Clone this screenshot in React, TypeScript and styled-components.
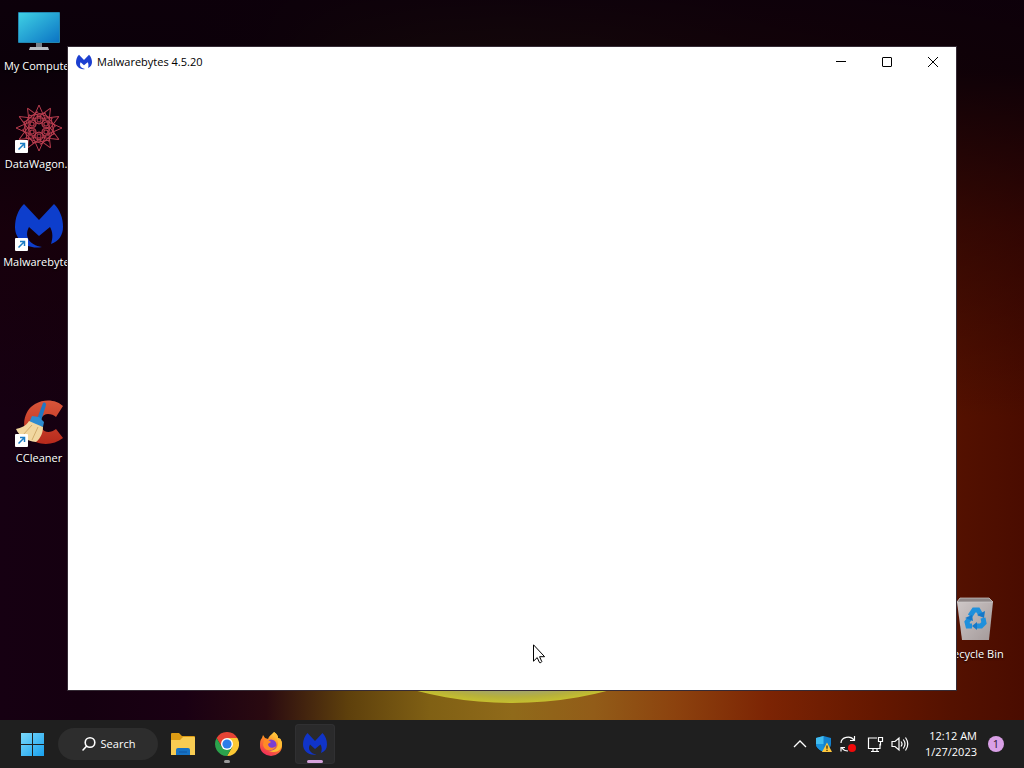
import React from "react";
import styled, { createGlobalStyle } from "styled-components";

const GlobalStyle = createGlobalStyle`
  *, *::before, *::after { box-sizing: border-box; }
  body {
    margin: 0;
    font-family: "Open Sans", "Noto Sans", sans-serif;
    font-size: 11px;
    line-height: 16px;
    background: #120010;
  }
  button { font: inherit; color: inherit; border: 0; padding: 0; background: none; }
  svg { display: block; flex: none; }
`;

const Desktop = styled.div`
  display: flex;
  flex-direction: column;
  min-height: 100vh;
  overflow: hidden;
`;

const Workspace = styled.main`
  position: relative;
  flex: 1;
  overflow: hidden;
  background:
    linear-gradient(180deg, rgba(12, 0, 10, 0.98) 0%, rgba(10, 0, 8, 0.92) 10%, rgba(24, 0, 5, 0.5) 32%, rgba(30, 0, 5, 0) 58%),
    linear-gradient(90deg, #160012 0%, #150010 8%, #1a0013 18%, #2a0a10 26%, #5e400c 34%, #806014 42%, #906a1a 50%, #925c18 58%, #8c420e 66%, #7c2404 75%, #661800 85%, #541100 93%, #4a0c00 100%);
`;

const Sun = styled.div`
  position: absolute;
  left: 50%;
  bottom: 17px;
  width: 680px;
  height: 600px;
  transform: translateX(-50%);
  border-radius: 50%;
  background: radial-gradient(closest-side, #a3a56a 0 96%, #b6b03c 98%, #c6c02e 100%);
`;

const Shortcut = styled.button<{ $row: number; $side?: "left" | "right" }>`
  position: absolute;
  ${(p) => (p.$side === "right" ? "right: 11px;" : "left: 1px;")}
  top: ${(p) => 6 + p.$row * 98}px;
  width: 76px;
  display: flex;
  flex-direction: column;
  align-items: center;
  gap: 4px;
  color: #fff;
  white-space: nowrap;
  text-shadow: 0 1px 2px #000;
`;

const ShortcutArt = styled.span`
  position: relative;
  width: 48px;
  height: 48px;
`;

const ArrowBadge = styled.span`
  position: absolute;
  left: 0;
  bottom: -1px;
`;

const Window = styled.section`
  position: absolute;
  top: 46px;
  right: 67px;
  bottom: 29px;
  left: 67px;
  background: #fff;
  border: 1px solid #352b35;
  color: #000;
`;

const TitleBar = styled.header`
  display: flex;
  align-items: center;
  height: 29px;
  padding-left: 8px;
`;

const Title = styled.h1`
  flex: 1;
  margin: 0 0 0 5px;
  font-size: 11px;
  font-weight: 400;
`;

const WindowButton = styled.button`
  display: grid;
  place-items: center;
  width: 46px;
  height: 28px;
`;

const Pointer = styled.div`
  position: absolute;
  left: 52%;
  bottom: 56px;
  padding-left: 1px;
`;

const Taskbar = styled.footer`
  display: flex;
  align-items: center;
  justify-content: space-between;
  height: 48px;
  padding: 0 10px 0 12px;
  background: #1f1f1f;
  color: #fff;
`;

const Group = styled.div`
  display: flex;
  align-items: center;
  gap: 4px;
`;

const AppButton = styled.button<{ $active?: boolean }>`
  position: relative;
  display: grid;
  place-items: center;
  width: 40px;
  height: 40px;
  border-radius: 4px;
  background: ${(p) => (p.$active ? "#2a2a2b" : "transparent")};
  box-shadow: ${(p) => (p.$active ? "inset 0 0 0 1px #303032" : "none")};
`;

const Indicator = styled.span<{ $active?: boolean }>`
  position: absolute;
  bottom: 1px;
  left: 50%;
  transform: translateX(-50%);
  width: ${(p) => (p.$active ? 16 : 6)}px;
  height: 3px;
  border-radius: 2px;
  background: ${(p) => (p.$active ? "#d6a3dc" : "#9a9a9a")};
`;

const SearchButton = styled.button`
  display: flex;
  align-items: center;
  justify-content: center;
  gap: 4px;
  width: 100px;
  height: 32px;
  margin: 0 1px 0 2px;
  border-radius: 16px;
  background: #2d2d2d;
`;

const Tray = styled.div`
  display: flex;
  align-items: center;
`;

const TrayButton = styled.button`
  display: grid;
  place-items: center;
  width: 24px;
  height: 40px;
`;

const NetworkGroup = styled.button`
  display: flex;
  align-items: center;
  gap: 7px;
  padding: 0 7px;
  height: 40px;
`;

const Clock = styled.button`
  text-align: right;
  padding: 0 5px 0 9px;
`;

const ClockLine = styled.time`
  display: block;
`;

const Notifications = styled.button`
  width: 16px;
  height: 16px;
  margin: 0 10px 0 6px;
  border-radius: 50%;
  background: #d9a0e6;
  color: #2b1530;
  text-align: center;
`;

const MalwarebytesLogo = ({ size, color = "#0d3ecc" }: { size: number; color?: string }) => (
  <svg width={size} height={size} viewBox="0 0 48 48" fill={color} aria-hidden="true">
    <path d="M9 2 24 18 39 2C45 8 48 16 48 25c0 8-4 14-12 17 2-6 2-12-1-17L24 34 14 25c-5 9 0 18 13 20C12 48 0 38 0 25 0 16 3 8 9 2Z" />
  </svg>
);

const ComputerIcon = () => (
  <svg width="48" height="48" viewBox="0 0 48 48" aria-hidden="true">
    <defs>
      <linearGradient id="screen" x1="0" y1="0" x2="1" y2="1">
        <stop offset="0" stopColor="#3fd0e4" />
        <stop offset="1" stopColor="#0b74c4" />
      </linearGradient>
    </defs>
    <path d="M21 36h6v6h-6z" fill="#77808a" />
    <path d="M15 41h18l1 3H14z" fill="#b9bec5" />
    <rect x="3" y="6" width="42" height="31" rx="1" fill="#2386b0" />
    <rect x="4" y="7" width="40" height="29" fill="url(#screen)" />
  </svg>
);

const spokes = [0, 30, 60, 90, 120, 150, 180, 210, 240, 270, 300, 330];
const rosettes = [0, 60, 120, 180, 240, 300];

const DataWagonIcon = () => (
  <svg width="48" height="48" viewBox="0 0 48 48" fill="none" stroke="#b83c4e" aria-hidden="true">
    {spokes.map((angle) => (
      <path key={angle} transform={`rotate(${angle} 24 24)`} d="M24 1 17 17M24 1 31 17M13 12 31 9" strokeWidth="1" />
    ))}
    {rosettes.map((angle) => (
      <g key={angle} transform={`rotate(${angle} 24 24)`}>
        <circle cx="24" cy="16" r="4" strokeWidth="1" />
        <circle cx="24" cy="16" r="2" strokeWidth="1" />
        <path d="M18 14Q24 25 30 14" strokeWidth=".8" />
      </g>
    ))}
  </svg>
);

const CCleanerIcon = () => (
  <svg width="48" height="48" viewBox="0 0 48 48" aria-hidden="true">
    <defs>
      <linearGradient id="cc" x1="0" y1="0" x2="0" y2="1">
        <stop offset="0" stopColor="#d9563a" />
        <stop offset="1" stopColor="#b72a1c" />
      </linearGradient>
    </defs>
    <path d="M48 8C42 2 30 0 20 6 8 13 6 30 14 39c8 9 24 9 34 1l-7-9c-5 4-12 4-14-1-4-7 0-14 6-14 3 0 6 1 8 3Z" fill="url(#cc)" />
    <path d="M28 5c2-1 3 0 3 2l-5 16-4-2Z" fill="#1f78c4" />
    <path d="m17 18 7 1 5 5-1 5-14-4Z" fill="#2c8bd0" />
    <path d="M14 23c-3 5-8 7-13 8 3 7 10 12 20 13 5-4 7-10 7-15Z" fill="#f1d7a0" />
    <path d="M17 27 8 37m15-8-6 13" stroke="#d2ac6c" fill="none" />
  </svg>
);

const RecycleBinIcon = () => (
  <svg width="48" height="48" viewBox="0 0 48 48" aria-hidden="true">
    <defs>
      <linearGradient id="bin" x1="0" y1="0" x2="1" y2="1">
        <stop offset="0" stopColor="#d0caca" />
        <stop offset="1" stopColor="#a39999" />
      </linearGradient>
    </defs>
    <path d="M6 8 9 4h29l4 4-4 38H11Z" fill="url(#bin)" />
    <path d="m6 8 3-4h29l4 4Z" fill="#8d8585" stroke="#cfcaca" strokeWidth=".7" />
    <g fill="none" stroke="#1f90dc" strokeWidth="5">
      <path d="m19 22 4-6h4l3 5" />
      <path d="m32 24 1 5-3 3h-5" />
      <path d="M21 32h-4l-1-4 3-4" />
    </g>
    <path d="m26 21 7 3 1-7ZM26 28l-5 4 5 4ZM14 24l7-3 1 6Z" fill="#1678c8" />
  </svg>
);

const ShortcutArrow = () => (
  <svg width="13" height="13" viewBox="0 0 13 13" aria-hidden="true">
    <rect width="13" height="13" rx="1" fill="#fff" />
    <path d="M3.5 9.5 9 4M5 3.5h4.500V8" fill="none" stroke="#1b7cc4" strokeWidth="1.5" />
  </svg>
);

const StartIcon = () => (
  <svg width="24" height="24" viewBox="0 0 24 24" fill="url(#start)" aria-hidden="true">
    <defs>
      <linearGradient id="start" gradientUnits="userSpaceOnUse" x1="0" y1="0" x2="24" y2="24">
        <stop offset="0" stopColor="#7fdcfb" />
        <stop offset="1" stopColor="#18a0ee" />
      </linearGradient>
    </defs>
    <path d="M1 1h11v11H1zM13 1h11v11H13zM1 13h11v11H1zM13 13h11v11H13z" />
  </svg>
);

const FolderIcon = () => (
  <svg width="26" height="24" viewBox="0 0 26 24" aria-hidden="true">
    <path d="M1 2q0-1 1-1h7l3 3h12q1 0 1 1v6H1Z" fill="#dd9b14" />
    <path d="M1 8h9l3-3h11q1 0 1 1v17H1Z" fill="#f8cc52" />
    <path d="M6 23v-5q0-2 2-2h10q2 0 2 2v5Z" fill="#1672c4" />
    <path d="M9 20h8" stroke="#125fae" strokeWidth="1.500" />
  </svg>
);

const ChromeIcon = () => (
  <svg width="24" height="24" viewBox="0 0 24 24" aria-hidden="true">
    <path d="M1.610 6A12 12 0 0 1 22.400 6H12L6.800 15Z" fill="#e64436" />
    <path d="M22.400 6A12 12 0 0 1 12 24L17.200 15 12 6Z" fill="#fcc934" />
    <path d="M12 24A12 12 0 0 1 1.610 6L6.800 15h10.400Z" fill="#2ba24c" />
    <circle cx="12" cy="12" r="6" fill="#fff" />
    <circle cx="12" cy="12" r="4.600" fill="#2b7de9" />
  </svg>
);

const FirefoxIcon = () => (
  <svg width="24" height="24" viewBox="0 0 24 24" aria-hidden="true">
    <defs>
      <linearGradient id="fox" x1=".8" y1="0" x2=".3" y2="1">
        <stop offset="0" stopColor="#ffe14a" />
        <stop offset=".45" stopColor="#ff8a24" />
        <stop offset="1" stopColor="#f0285c" />
      </linearGradient>
    </defs>
    <path d="M15 0c3 2 4 4 4 6 2 0 3 1 3 2 1 2 1 4 1 6a11 10 0 0 1-22 0c0-4 0-6 2-8l1-3 2 3 3 1c1-3 3-4 6-7Z" fill="url(#fox)" />
    <circle cx="12" cy="13" r="5.500" fill="#7a3fd2" />
    <path d="M5 8c3-1 5 0 7 2l-3 2c0 4 5 5 8 2-1 5-11 7-13-1Z" fill="#ff8b25" />
    <path d="M15 0c-1 4 4 6 4 11 0 6-5 8-9 8 7 3 13-1 13-7 0-3-1-4-4-6 0-2-1-4-4-6Z" fill="#ffbd35" />
  </svg>
);

const SearchIcon = () => (
  <svg width="16" height="16" viewBox="0 0 16 16" fill="none" stroke="#fff" strokeWidth="1.600" strokeLinecap="round" aria-hidden="true">
    <circle cx="9" cy="6.500" r="4.800" />
    <path d="M5.500 10.200 2 14" />
  </svg>
);

const ChevronUp = () => (
  <svg width="14" height="14" viewBox="0 0 14 14" fill="none" stroke="#fff" strokeWidth="1.300" aria-hidden="true">
    <path d="m1 10 6-6 6 6" />
  </svg>
);

const ShieldIcon = () => (
  <svg width="16" height="16" viewBox="0 0 16 16" aria-hidden="true">
    <path d="M7.500 0 15 2v6c0 4-4 6-7.500 8C4 14 0 12 0 8V2Z" fill="#1482cf" />
    <path d="M7.500 0v8H0V2Z" fill="#42bdf0" />
    <path d="M7.500 8v8C4 14 0 12 0 8Z" fill="#1992dc" />
    <path d="M11 6.500 16 16H6Z" fill="#ffc83d" />
    <path d="M11 9.500v3.300m0 1v1.200" stroke="#332300" strokeWidth="1.200" />
  </svg>
);

const SyncIcon = () => (
  <svg width="16" height="16" viewBox="0 0 16 16" fill="none" stroke="#fff" strokeWidth="1.200" aria-hidden="true">
    <path d="M1 7a7 6 0 0 1 13-3M14.500 0v4.500H10M1 15.500v-4h4M2 12c2 3 4 3 6 3" />
    <circle cx="12" cy="12" r="4" fill="#f00a0a" stroke="none" />
  </svg>
);

const NetworkIcon = () => (
  <svg width="17" height="17" viewBox="0 0 17 17" fill="none" stroke="#fff" strokeWidth="1.200" aria-hidden="true">
    <path d="M10 2H1.500v10.500H13V8M4 15.500h8M6 12.500v3M10 12.500v3" />
    <path d="M11.500 1.500h4v4h-4zM13.500 5.500v4" />
  </svg>
);

const SpeakerIcon = () => (
  <svg width="18" height="16" viewBox="0 0 18 16" fill="none" stroke="#fff" strokeWidth="1.200" aria-hidden="true">
    <path d="M1 5.500h3L8 2v12l-4-3.500H1ZM10 5.500q2 2.500 0 5M12.300 3.500q3.400 4.500 0 9M14.500 1.500q4.500 6.500 0 13" />
  </svg>
);

const PointerIcon = () => (
  <svg width="12" height="20" viewBox="0 0 12 20" aria-hidden="true">
    <path d="M.5.800v16.400l3.700-3.600 2.300 5q1.500.600 2.300-.9l-2.200-5h5Z" fill="#fff" stroke="#000" />
  </svg>
);

const shortcuts = [
  { label: "My Computer", row: 0, Icon: ComputerIcon, linked: false },
  { label: "DataWagon...", row: 1, Icon: DataWagonIcon, linked: true },
  { label: "Malwarebytes", row: 2, Icon: () => <MalwarebytesLogo size={48} />, linked: true },
  { label: "CCleaner", row: 4, Icon: CCleanerIcon, linked: true },
];

export default function App() {
  return (
    <Desktop>
      <GlobalStyle />
      <Workspace>
        <Sun />
        {shortcuts.map(({ label, row, Icon, linked }) => (
          <Shortcut key={label} $row={row}>
            <ShortcutArt>
              <Icon />
              {linked && <ArrowBadge><ShortcutArrow /></ArrowBadge>}
            </ShortcutArt>
            {label}
          </Shortcut>
        ))}
        <Shortcut $row={6} $side="right">
          <ShortcutArt><RecycleBinIcon /></ShortcutArt>
          Recycle Bin
        </Shortcut>
        <Window aria-label="Malwarebytes">
          <TitleBar>
            <MalwarebytesLogo size={16} color="#1c3fd0" />
            <Title>Malwarebytes 4.5.20</Title>
            <WindowButton aria-label="Minimize">
              <svg width="10" height="10" viewBox="0 0 10 10" stroke="#000"><path d="M0 4.500h10" /></svg>
            </WindowButton>
            <WindowButton aria-label="Maximize">
              <svg width="10" height="10" viewBox="0 0 10 10" fill="none" stroke="#000"><rect x=".5" y=".5" width="9" height="9" rx=".5" /></svg>
            </WindowButton>
            <WindowButton aria-label="Close">
              <svg width="10" height="10" viewBox="0 0 10 10" stroke="#000"><path d="m0 0 10 10M10 0 0 10" /></svg>
            </WindowButton>
          </TitleBar>
        </Window>
        <Pointer><PointerIcon /></Pointer>
      </Workspace>
      <Taskbar>
        <Group>
          <AppButton aria-label="Start"><StartIcon /></AppButton>
          <SearchButton><SearchIcon />Search</SearchButton>
          <AppButton aria-label="File Explorer"><FolderIcon /></AppButton>
          <AppButton aria-label="Google Chrome"><ChromeIcon /><Indicator /></AppButton>
          <AppButton aria-label="Firefox"><FirefoxIcon /></AppButton>
          <AppButton aria-label="Malwarebytes" $active>
            <MalwarebytesLogo size={24} color="#1034c8" />
            <Indicator $active />
          </AppButton>
        </Group>
        <Tray>
          <TrayButton aria-label="Show hidden icons"><ChevronUp /></TrayButton>
          <TrayButton aria-label="Windows Security"><ShieldIcon /></TrayButton>
          <TrayButton aria-label="Windows Update"><SyncIcon /></TrayButton>
          <NetworkGroup aria-label="Network and volume"><NetworkIcon /><SpeakerIcon /></NetworkGroup>
          <Clock>
            <ClockLine>12:12 AM</ClockLine>
            <ClockLine>1/27/2023</ClockLine>
          </Clock>
          <Notifications>1</Notifications>
        </Tray>
      </Taskbar>
    </Desktop>
  );
}
